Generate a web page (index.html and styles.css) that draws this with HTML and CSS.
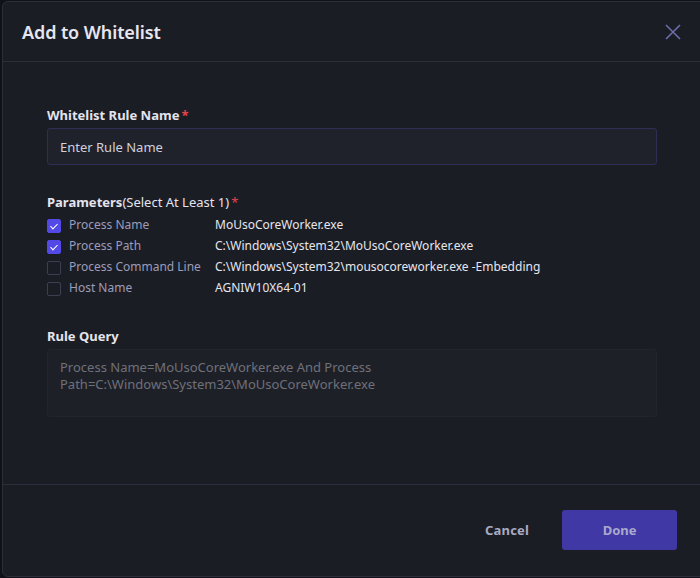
FILE: index.html
```html
<!DOCTYPE html>
<html lang="en">
<head>
    <meta charset="UTF-8">
    <meta name="viewport" content="width=device-width, initial-scale=1.0">
    <title>Add to Whitelist</title>
    <link rel="stylesheet" href="styles.css">
</head>
<body>

    <div class="modal">
        <!-- Header -->
        <div class="modal-header">
            <h2>Add to Whitelist</h2>
            <button class="close-btn" aria-label="Close">
                <svg width="16" height="16" viewBox="0 0 16 16">
                    <path d="M1 1 L15 15 M15 1 L1 15" stroke="currentColor" stroke-width="1.6" fill="none"/>
                </svg>
            </button>
        </div>

        <!-- Body -->
        <div class="modal-body">
            <label class="field-label">Whitelist Rule Name<span class="req">*</span></label>
            <input class="text-input" type="text" placeholder="Enter Rule Name">

            <div class="field-label params-label"><b>Parameters</b>(Select At Least 1)<span class="req">*</span></div>
            <div class="params">
                <div class="param-row">
                    <span class="check checked"></span>
                    <span class="param-name">Process Name</span>
                    <span class="param-value">MoUsoCoreWorker.exe</span>
                </div>
                <div class="param-row">
                    <span class="check checked"></span>
                    <span class="param-name">Process Path</span>
                    <span class="param-value">C:\Windows\System32\MoUsoCoreWorker.exe</span>
                </div>
                <div class="param-row">
                    <span class="check"></span>
                    <span class="param-name">Process Command Line</span>
                    <span class="param-value">C:\Windows\System32\mousocoreworker.exe -Embedding</span>
                </div>
                <div class="param-row">
                    <span class="check"></span>
                    <span class="param-name">Host Name</span>
                    <span class="param-value">AGNIW10X64-01</span>
                </div>
            </div>

            <div class="field-label query-label">Rule Query</div>
            <div class="query-box">Process Name=MoUsoCoreWorker.exe And Process Path=C:\Windows\System32\MoUsoCoreWorker.exe</div>
        </div>

        <!-- Footer -->
        <div class="modal-footer">
            <button class="btn-cancel">Cancel</button>
            <button class="btn-done">Done</button>
        </div>
    </div>

</body>
</html>
```

FILE: styles.css
```css
* {
    margin: 0;
    padding: 0;
    box-sizing: border-box;
}

body {
    font-family: 'Noto Sans', 'Open Sans', sans-serif;
    background-color: #111217;
    color: #dcdce6;
    overflow: hidden;
}

.modal {
    margin: 1px 0 0 2px;
    width: 720px;
    height: 576px;
    background-color: #1b1d25;
    border: 1px solid #2c2f3b;
    border-radius: 6px;
    display: flex;
    flex-direction: column;
}

.modal-header {
    height: 60px;
    display: flex;
    align-items: center;
    justify-content: space-between;
    padding: 0 38px 0 19px;
    border-bottom: 1px solid #2c2f3b;
}

.modal-header h2 {
    font-size: 18px;
    font-weight: 600;
    letter-spacing: -0.1px;
    color: #e6e6f0;
}

.close-btn {
    background: none;
    border: none;
    color: #6c6ca8;
    cursor: pointer;
    display: flex;
    margin-right: 2px;
}

.modal-body {
    flex: 1;
    padding: 44px 0 0 44px;
}

.field-label {
    display: block;
    font-size: 13px;
    font-weight: 700;
    color: #e4e4ee;
    line-height: 18px;
}

.req {
    color: #e0454f;
    margin-left: 2px;
}

.text-input {
    display: block;
    width: 610px;
    height: 37px;
    margin-top: 4px;
    padding: 0 12px;
    background-color: #20222b;
    border: 1px solid #2f2e55;
    border-radius: 3px;
    font-family: inherit;
    font-size: 13px;
    color: #d6d6e2;
    outline: none;
}

.text-input::placeholder {
    color: #d0d0de;
}

.params-label {
    margin-top: 28px;
    font-weight: 400;
}

.params-label b {
    font-weight: 700;
}

.params {
    margin-top: 3px;
}

.param-row {
    display: flex;
    align-items: center;
    height: 21px;
    font-size: 12px;
}

.check {
    width: 14px;
    height: 14px;
    border: 1px solid #3c3f52;
    border-radius: 2px;
    margin-right: 8px;
    position: relative;
    top: 1px;
}

.check.checked {
    background-color: #5249e6;
    border-color: #5249e6;
}

.check.checked::after {
    content: "";
    position: absolute;
    left: 4px;
    top: 2px;
    width: 3px;
    height: 6px;
    border: solid #fff;
    border-width: 0 1.5px 1.5px 0;
    transform: rotate(45deg);
}

.param-name {
    width: 146px;
    color: #9c9cb8;
}

.param-value {
    color: #e6e6ee;
}

.query-label {
    margin-top: 29px;
}

.query-box {
    width: 610px;
    height: 68px;
    margin-top: 4px;
    padding: 9px 100px 0 12px;
    background-color: #1e2028;
    border: 1px solid #23252e;
    border-radius: 3px;
    font-size: 13px;
    line-height: 17px;
    color: #6e707a;
}

.modal-footer {
    height: 92px;
    border-top: 1px solid #2c2f3b;
    display: flex;
    align-items: center;
    padding: 0 0 2px 438px;
}

.btn-cancel {
    background: none;
    border: none;
    font-family: inherit;
    font-size: 13px;
    font-weight: 700;
    color: #a9aac4;
    letter-spacing: 0.2px;
    padding: 0 33px 0 44px;
    cursor: pointer;
}

.btn-done {
    width: 115px;
    height: 40px;
    background-color: #3f38a5;
    border: none;
    border-radius: 3px;
    font-family: inherit;
    font-size: 13px;
    font-weight: 700;
    color: #aaa8cc;
    cursor: pointer;
}
```
